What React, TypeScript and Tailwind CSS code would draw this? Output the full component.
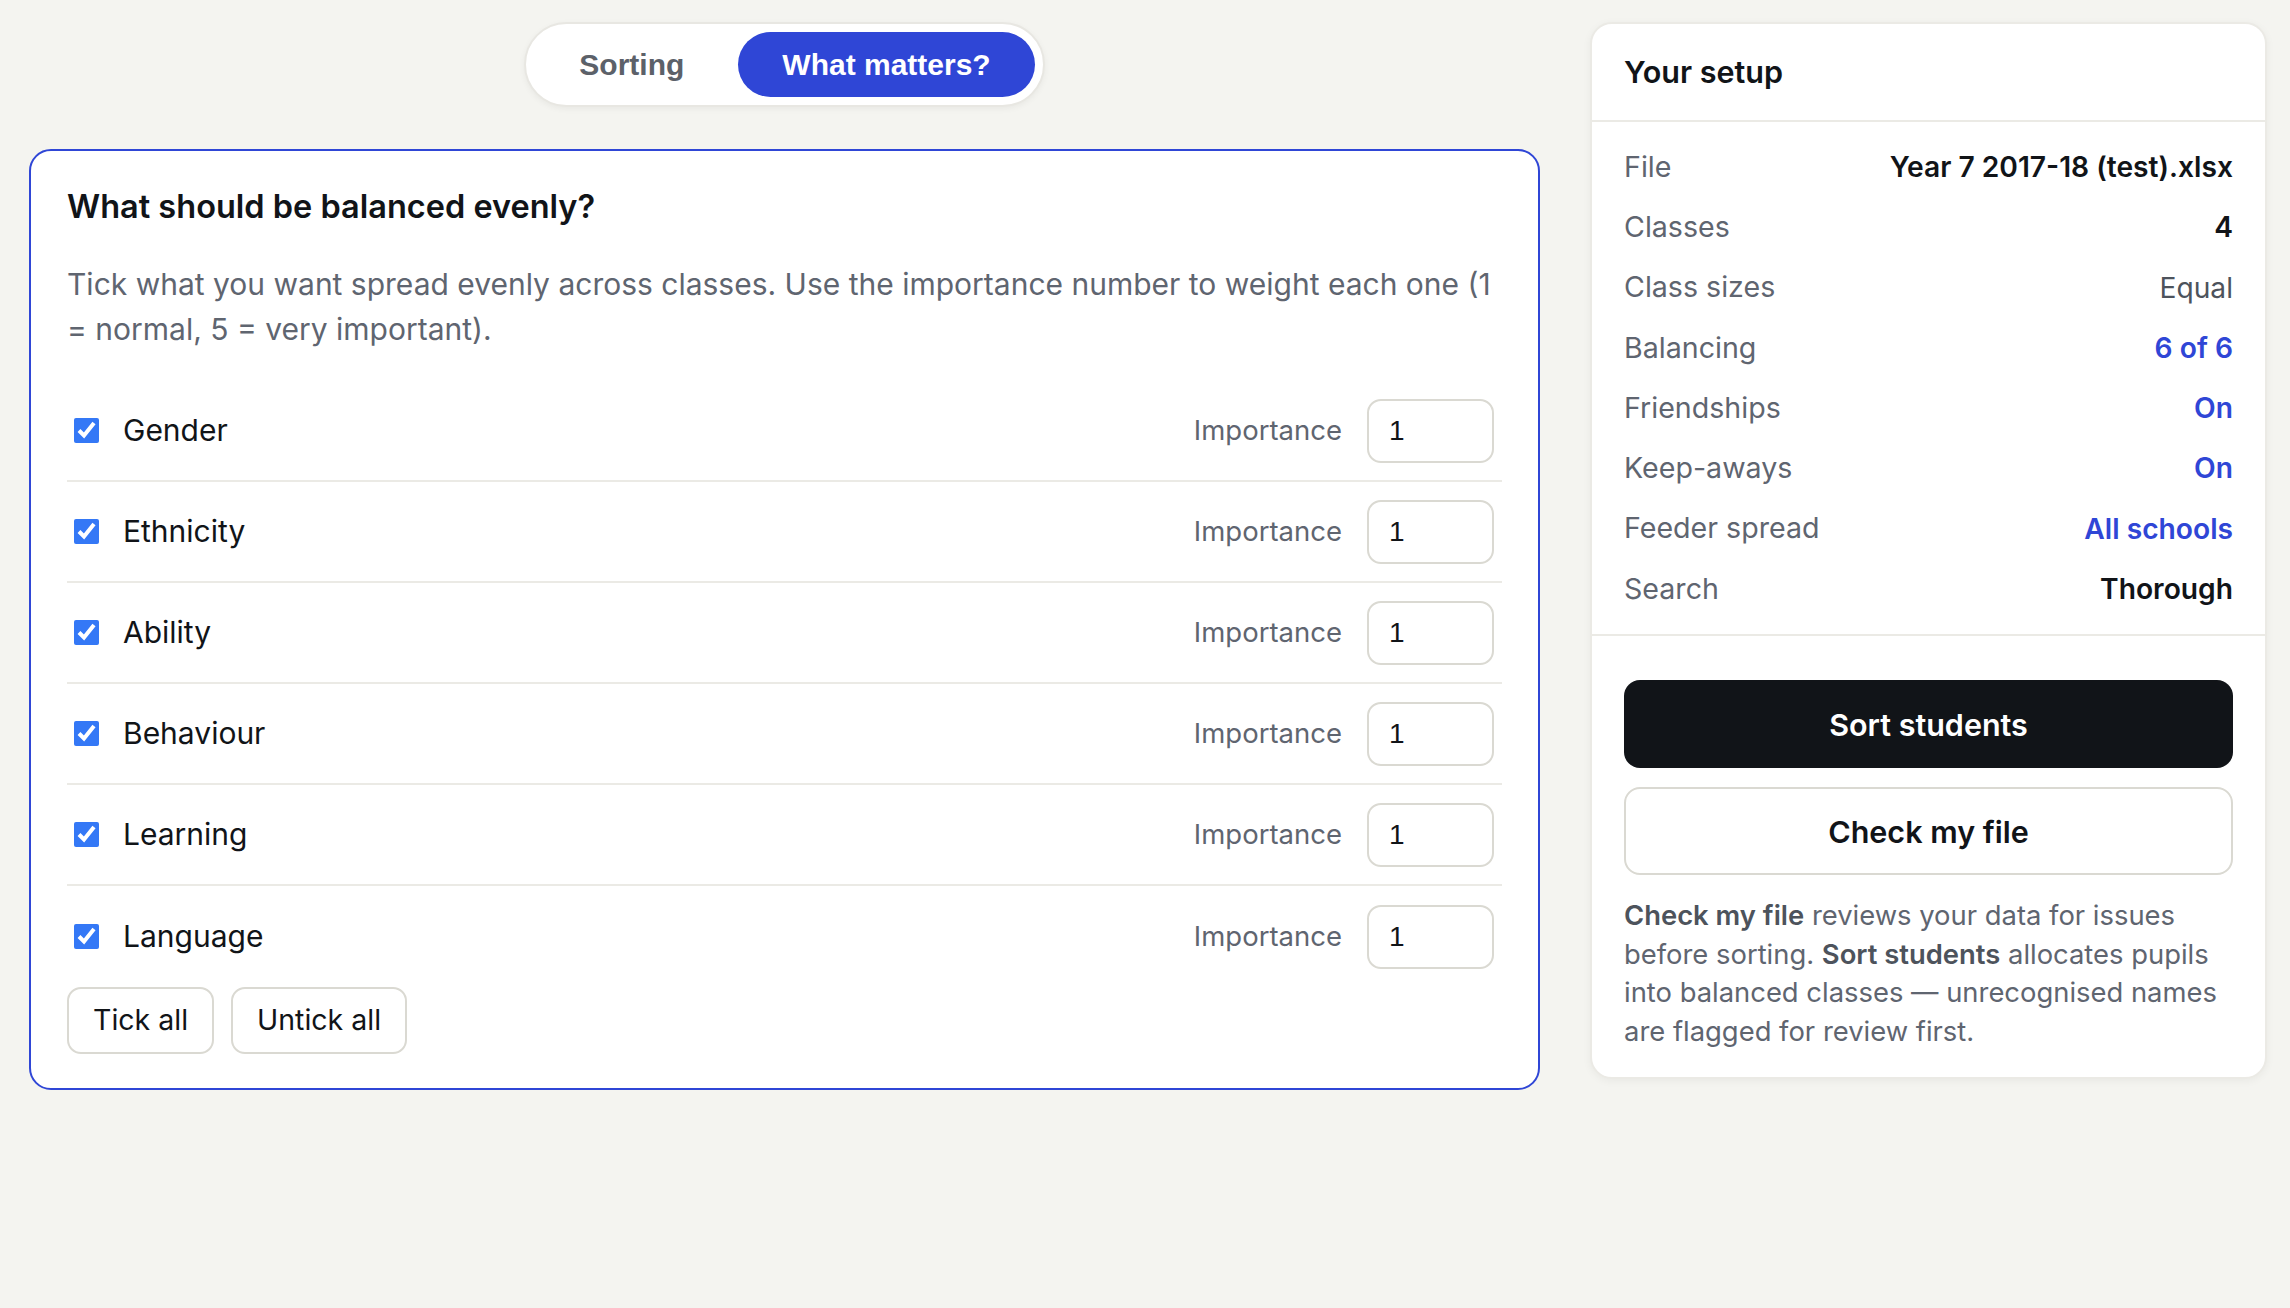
import { useState } from "react";

const factors = ["Gender", "Ethnicity", "Ability", "Behaviour", "Learning", "Language"];

const setup = [
  { label: "File", value: "Year 7 2017-18 (test).xlsx", tone: "text-[#111418] font-semibold" },
  { label: "Classes", value: "4", tone: "text-[#111418] font-semibold" },
  { label: "Class sizes", value: "Equal", tone: "text-[#4d535c]" },
  { label: "Balancing", value: "6 of 6", tone: "text-[#2f46d6] font-semibold" },
  { label: "Friendships", value: "On", tone: "text-[#2f46d6] font-semibold" },
  { label: "Keep-aways", value: "On", tone: "text-[#2f46d6] font-semibold" },
  { label: "Feeder spread", value: "All schools", tone: "text-[#2f46d6] font-semibold" },
  { label: "Search", value: "Thorough", tone: "text-[#111418] font-semibold" },
];

function FactorRow({ name, last }: { name: string; last: boolean }) {
  const [on, setOn] = useState(true);
  return (
    <div
      className={
        "flex items-center h-[101px] " + (last ? "" : "border-b-2 border-[#ebeae5]")
      }
    >
      <label className="flex items-center gap-[24px] pl-[7px] flex-1">
        <input
          type="checkbox"
          checked={on}
          onChange={() => setOn(!on)}
          className="w-[25px] h-[25px] accent-[#3478f6]"
        />
        <span className="text-[30px] text-[#111418]">{name}</span>
      </label>
      <span className="text-[27.5px] text-[#5f6570] mr-[25px]">Importance</span>
      <input
        defaultValue="1"
        className="w-[127px] h-[64px] rounded-[14px] border-2 border-[#dad9d2] px-[20px] text-[28px] text-[#111418] font-['Liberation_Sans',Arial,sans-serif] mr-[8px]"
      />
    </div>
  );
}

export default function App() {
  const [tab, setTab] = useState("what");
  return (
    <div className="min-h-screen bg-[#f4f4f0] font-['Inter',sans-serif] flex items-start gap-[50px] pt-[22px] pl-[29px] pr-[23px]">
      <div className="w-[1511px] flex flex-col items-center">
        <div className="flex gap-[9px] p-[8px] bg-white rounded-full border-2 border-[#e8e7e2] shadow-[0_2px_6px_rgba(0,0,0,0.05)] font-['Liberation_Sans',Arial,sans-serif] font-bold text-[30px]">
          <button
            onClick={() => setTab("sort")}
            className={
              "h-[65px] px-[45px] rounded-full " +
              (tab === "sort" ? "bg-[#2f46d6] text-white" : "text-[#5c6169]")
            }
          >
            Sorting
          </button>
          <button
            onClick={() => setTab("what")}
            className={
              "h-[65px] px-[44px] rounded-full " +
              (tab === "what" ? "bg-[#2f46d6] text-white" : "text-[#5c6169]")
            }
          >
            What matters?
          </button>
        </div>

        <div className="mt-[42px] w-full bg-white border-2 border-[#2f46d6] rounded-[22px] px-[36px] pt-[36px] pb-[34px]">
          <h2 className="text-[32.5px] leading-[40px] font-semibold text-[#111418]">
            What should be balanced evenly?
          </h2>
          <p className="mt-[35px] text-[30px] leading-[45px] text-[#5f6570]">
            Tick what you want spread evenly across classes. Use the importance number to weight
            each one (1 = normal, 5 = very important).
          </p>
          <div className="mt-[29px]">
            {factors.map((f, i) => (
              <FactorRow key={f} name={f} last={i === factors.length - 1} />
            ))}
          </div>
          <div className="flex gap-[17px]">
            <button className="h-[67px] px-[24px] rounded-[14px] border-2 border-[#dad9d2] text-[28.5px] text-[#111418]">
              Tick all
            </button>
            <button className="h-[67px] px-[24px] rounded-[14px] border-2 border-[#dad9d2] text-[28.5px] text-[#111418]">
              Untick all
            </button>
          </div>
        </div>
      </div>

      <div className="flex-1 bg-white rounded-[22px] border-2 border-[#ebeae5] shadow-[0_2px_8px_rgba(0,0,0,0.05)]">
        <div className="h-[98px] flex items-center px-[32px] border-b-2 border-[#ebeae5]">
          <h3 className="text-[30.5px] font-semibold text-[#111418]">Your setup</h3>
        </div>
        <div className="px-[32px] pt-[15px] pb-[15px] border-b-2 border-[#ebeae5]">
          {setup.map((r) => (
            <div key={r.label} className="h-[60.3px] flex items-center justify-between">
              <span className="text-[28.6px] text-[#5f6570]">{r.label}</span>
              <span className={"text-[28.2px] " + r.tone}>{r.value}</span>
            </div>
          ))}
        </div>
        <div className="px-[32px] pt-[44px] pb-[27px]">
          <button className="w-full h-[88px] rounded-[16px] bg-[#111418] text-white text-[30.5px] font-semibold">
            Sort students
          </button>
          <button className="mt-[19px] w-full h-[88px] rounded-[16px] border-2 border-[#dad9d2] text-[#111418] text-[30.5px] font-semibold">
            Check my file
          </button>
          <p className="mt-[21px] text-[27.4px] leading-[38.5px] text-[#5f6570]">
            <b className="font-semibold text-[#4d535c]">Check my file</b> reviews your data for issues
            before sorting. <b className="font-semibold text-[#4d535c]">Sort students</b> allocates
            pupils into balanced classes — unrecognised names are flagged for review first.
          </p>
        </div>
      </div>
    </div>
  );
}
